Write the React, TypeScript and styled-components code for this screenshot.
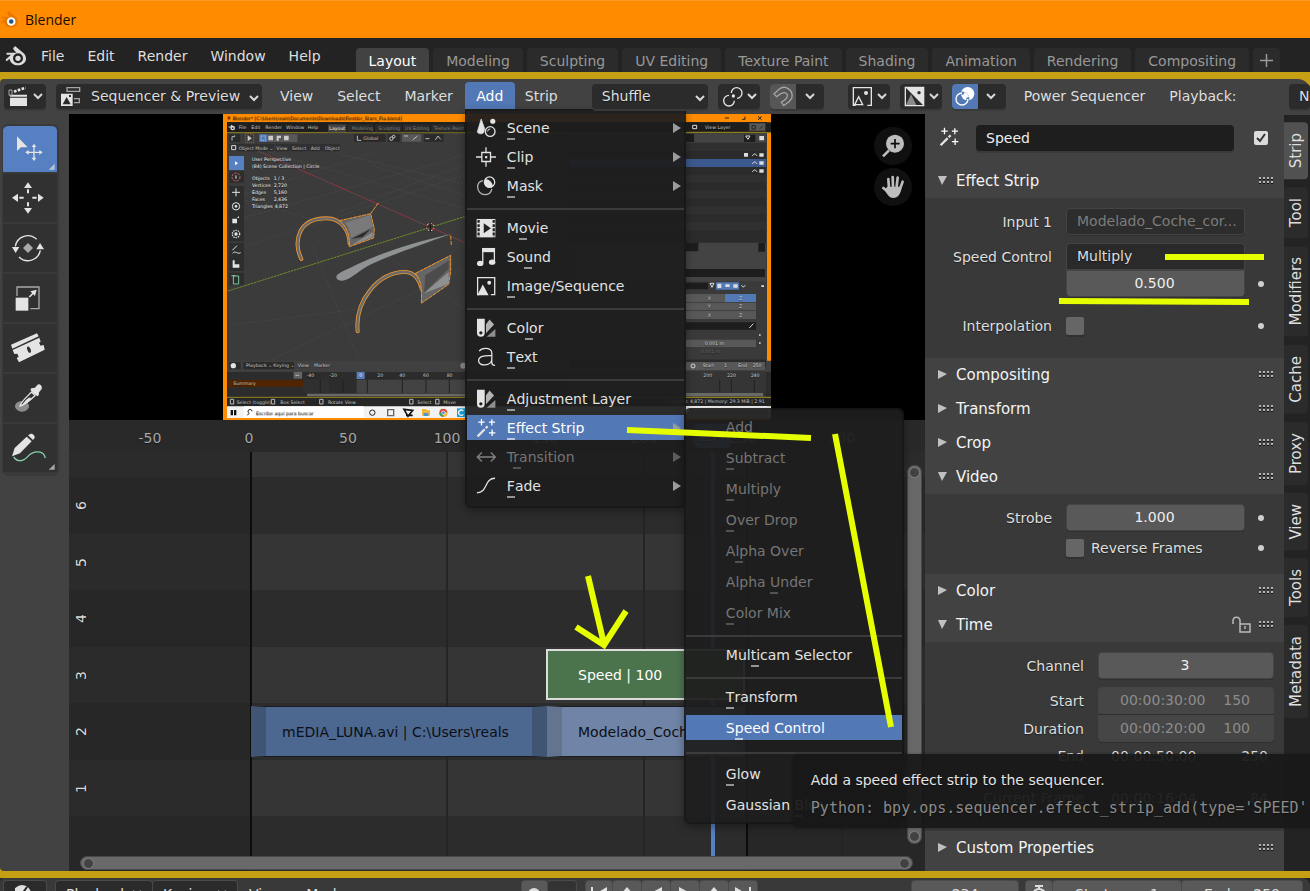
import React from 'react';
import styled, { createGlobalStyle, css } from 'styled-components';

const Global = createGlobalStyle`
  * { box-sizing: border-box; }
  html, body { margin: 0; background: #232323; }
  body, button, input, select {
    font-family: 'DejaVu Sans', sans-serif;
    font-size: 14px;
    line-height: 20px;
    color: #dedede;
  }
  button, input, select { border: 0; margin: 0; padding: 0; background: none; outline: 0; }
  svg { display: block; flex: none; }
`;

const accent = '#5279b6';
const gold = '#c5a014';
const marker = '#e6ff00';

/* ---------- shell ---------- */

const Page = styled.div`
  position: relative;
  height: 100vh;
  min-height: 600px;
  overflow: hidden;
  display: flex;
  flex-direction: column;
  text-shadow: 0 1px 1px rgba(0, 0, 0, 0.45);
`;

const TitleBar = styled.header`
  flex: none;
  height: 38px;
  display: flex;
  align-items: center;
  gap: 6px;
  border-top: 1px solid #ff9d26;
  background: #ff8c00;
  color: #140c00;
  font-family: 'Open Sans', 'Noto Sans', sans-serif;
  text-shadow: none;
`;

const TopBar = styled.nav`
  flex: none;
  height: 34px;
  display: flex;
  align-items: flex-end;
  padding-left: 5px;
  background: #232323;
`;

const MenuLabel = styled.button`
  height: 34px;
  padding: 2px 11px 0;
  white-space: nowrap;
`;

const MenuGroup = styled.div`
  display: flex;
  gap: 1px;
  margin-left: 3px;
`;

const Tabs = styled.div`
  display: flex;
  gap: 4px;
  margin-left: 24px;
`;

const WorkspaceTab = styled.button<{ $active?: boolean; $pad?: number }>`
  height: 24px;
  padding: 1px ${p => p.$pad ?? 13}px 0;
  white-space: nowrap;
  border-radius: 4px 4px 0 0;
  background: ${p => (p.$active ? '#424242' : '#2b2b2b')};
  color: ${p => (p.$active ? '#fff' : '#989898')};
`;

const Frame = styled.div`
  flex: 1;
  min-height: 0;
  display: flex;
  flex-direction: column;
  border-top: 7px solid ${gold};
  border-bottom: 7px solid ${gold};
  background: ${gold};
`;

const Editor = styled.main`
  flex: 1;
  min-height: 0;
  display: flex;
  flex-direction: column;
  border-radius: 4px 12px 4px 4px;
  background: #424242;
`;

/* ---------- editor header ---------- */

const HeaderBar = styled.div`
  position: relative;
  z-index: 3;
  flex: none;
  height: 35px;
  display: flex;
  align-items: flex-start;
  padding: 5px 0 0 4px;
`;

const Control = styled.div<{ $w: number; $left?: number; $right?: number }>`
  flex: none;
  position: relative;
  width: ${p => p.$w}px;
  height: 25px;
  margin-left: ${p => p.$left ?? 0}px;
  margin-right: ${p => p.$right ?? 0}px;
  display: flex;
  align-items: center;
  border-radius: 4px;
  background: #2b2b2b;
  box-shadow: 0 2px 0 #393939;
  overflow: hidden;
`;

const IconButton = styled.button<{ $pad?: number; $bg?: string; $w?: number }>`
  width: ${p => (p.$w ? p.$w + 'px' : '100%')};
  height: 25px;
  padding: 0 ${p => p.$pad ?? 4}px;
  display: flex;
  align-items: center;
  justify-content: space-between;
  background: ${p => p.$bg ?? 'transparent'};
`;

const PlainSelect = styled.select<{ $pad: number }>`
  appearance: none;
  width: 100%;
  height: 100%;
  padding: 0 0 2px ${p => p.$pad}px;
  text-shadow: inherit;
`;

const SelectArrow = styled.span`
  position: absolute;
  right: 3px;
  top: 11px;
  pointer-events: none;
`;

const SelectIcon = styled.span`
  position: absolute;
  left: 4px;
  top: 0;
  pointer-events: none;
`;

const HeaderMenu = styled.button`
  height: 25px;
  padding: 0 12px 2px;
  white-space: nowrap;
`;

const AddWrap = styled.div`
  position: relative;
  margin: -2px -2px 0 0;
`;

const AddButton = styled.button`
  width: 50px;
  height: 27px;
  border-radius: 4px 4px 0 0;
  background: ${accent};
  color: #fff;
`;

/* ---------- pop-up menus ---------- */

const menuSurface = css`
  position: absolute;
  list-style: none;
  margin: 0;
  border: 2px solid rgba(22, 22, 22, 0.9);
  background: rgba(30, 30, 30, 0.94);
  background-clip: padding-box;
  box-shadow: 0 3px 8px rgba(0, 0, 0, 0.35);
`;

const AddMenu = styled.ul`
  ${menuSurface}
  left: 0;
  top: 27px;
  width: 221px;
  padding: 2px 0 6px;
  border-radius: 0 0 6px 6px;
`;

const SubMenu = styled.ul`
  ${menuSurface}
  left: 217px;
  top: -5px;
  width: 220px;
  padding: 1px 0 2px;
  border-radius: 6px;
  color: #e4e4e4;
`;

const MenuRow = styled.li<{ $h: number }>`
  position: relative;
  height: ${p => p.$h}px;
  display: flex;
  align-items: center;
`;

const MenuItem = styled.button<{ $on?: boolean; $dim?: boolean; $sub?: boolean }>`
  width: 100%;
  height: 25px;
  display: flex;
  align-items: center;
  gap: 11px;
  padding: 0 3px 0 ${p => (p.$sub ? 40 : 9)}px;
  text-align: left;
  white-space: nowrap;
  background: ${p => (p.$on ? accent : 'transparent')};
  color: ${p => (p.$dim ? '#757575' : p.$on ? '#fff' : '#e2e2e2')};
  svg { opacity: ${p => (p.$dim ? 0.5 : 1)}; }
`;

const Grow = styled.span`
  flex: 1;
`;

const Accel = styled.span`
  position: relative;
  &::after {
    content: '';
    position: absolute;
    left: 0;
    bottom: -4px;
    width: 8px;
    height: 2px;
    background: currentColor;
    opacity: 0.6;
  }
`;

const Divider = styled.li<{ $before: number; $after: number }>`
  height: 2px;
  margin: ${p => p.$before}px 0 ${p => p.$after}px;
  background: #3b3b3b;
`;

const Tooltip = styled.div`
  position: absolute;
  left: 107px;
  top: 344px;
  width: 540px;
  height: 74px;
  padding: 16px 0 0 18px;
  display: flex;
  flex-direction: column;
  gap: 8px;
  border-radius: 6px;
  background: rgba(24, 24, 24, 0.94);
  box-shadow: 0 0 3px rgba(0, 0, 0, 0.3);
  white-space: nowrap;
`;

const Code = styled.code`
  font-family: 'DejaVu Sans Mono', monospace;
  font-size: 15px;
  color: #8b8b8b;
`;

/* ---------- body ---------- */

const Body = styled.div`
  flex: 1;
  min-height: 0;
  display: flex;
`;

const ToolColumn = styled.aside`
  flex: none;
  width: 69px;
  padding: 10px 0 0 2px;
`;

const ToolStack = styled.div`
  width: 57px;
  height: 352px;
  padding: 0 2px 0 1px;
  display: flex;
  flex-direction: column;
  gap: 2px;
  border-radius: 6px;
  background: #393939;
`;

const Tool = styled.button<{ $active?: boolean }>`
  height: 48px;
  border-top: ${p => (p.$active ? 2 : 0)}px solid #393939;
  border-radius: ${p => (p.$active ? '6px 6px 0 0' : '0')};
  background: ${p => (p.$active ? '#5680c2' : '#313131')};
  svg { margin-top: ${p => (p.$active ? -2 : 0)}px; }
`;

const Center = styled.div`
  flex: 1;
  min-width: 0;
  display: flex;
  flex-direction: column;
`;

const Preview = styled.section`
  position: relative;
  flex: none;
  height: 306px;
  display: flex;
  justify-content: center;
  background: #000;
`;

const Gizmos = styled.div`
  position: absolute;
  right: 13px;
  top: 13px;
  display: flex;
  flex-direction: column;
  gap: 3px;
`;

const Gizmo = styled.button`
  width: 38px;
  height: 38px;
  border-radius: 50%;
  background: #101010;
`;

const Timeline = styled.section`
  position: relative;
  flex: 1;
  min-height: 0;
  display: flex;
  flex-direction: column;
  overflow: hidden;
  background: #2d2d2d;
`;

const Ruler = styled.div`
  position: relative;
  z-index: 1;
  flex: none;
  height: 32px;
  background: #292929;
  color: #a6a6a6;
`;

const Tick = styled.span`
  position: absolute;
  top: 8px;
  width: 60px;
  margin-left: -31px;
  text-align: center;
`;

const FrameBadge = styled(Tick)`
  top: 4px;
  width: 38px;
  height: 24px;
  margin-left: -19px;
  line-height: 24px;
  border-radius: 5px;
  background: #5680c2;
  color: #fff;
`;

const Channel = styled.div<{ $light?: boolean; $h: number }>`
  position: relative;
  flex: ${p => (p.$h ? 'none' : '1')};
  height: ${p => p.$h}px;
  padding-left: 2px;
  display: flex;
  align-items: center;
  background: ${p => (p.$light ? '#353535' : '#2c2c2c')};
`;

const ChannelNo = styled.span`
  position: relative;
  z-index: 2;
  writing-mode: vertical-rl;
  rotate: 180deg;
  color: #dcdcdc;
`;

const Shade = styled.div<{ $side: 'left' | 'right' }>`
  position: absolute;
  top: 32px;
  bottom: 0;
  ${p => p.$side}: 0;
  background: rgba(34, 34, 34, 0.5);
`;

const GridLine = styled.div<{ $bound?: boolean }>`
  position: absolute;
  top: 32px;
  bottom: 15px;
  width: 2px;
  background: ${p => (p.$bound ? '#0c0c0c' : '#242424')};
`;

const PlayLine = styled.div`
  position: absolute;
  top: 28px;
  bottom: 15px;
  width: 4px;
  margin-left: -1px;
  background: #5680c2;
`;

const Clip = styled.div<{ $top: number; $bg: string; $edge?: string; $ink: string; $line: string; $lw: number }>`
  position: absolute;
  z-index: 1;
  top: ${p => p.$top}px;
  height: 51px;
  display: flex;
  align-items: center;
  overflow: hidden;
  white-space: nowrap;
  border: ${p => p.$lw}px solid ${p => p.$line};
  border-left: ${p => (p.$edge ? 15 : 2)}px solid ${p => p.$edge ?? p.$line};
  border-right: ${p => (p.$edge ? 15 : 2)}px solid ${p => p.$edge ?? p.$line};
  padding-left: ${p => (p.$edge ? 16 : 30)}px;
  background: ${p => p.$bg};
  color: ${p => p.$ink};
  text-shadow: none;
`;

const ScrollX = styled.div`
  position: absolute;
  z-index: 2;
  left: 11px;
  right: 12px;
  bottom: 1px;
  height: 14px;
  display: flex;
  justify-content: space-between;
  align-items: center;
  padding: 0 2px;
  border: 1px solid #484848;
  border-radius: 7px;
  background: #696969;
`;

const ScrollY = styled(ScrollX)`
  left: auto;
  right: 3px;
  top: 45px;
  bottom: 27px;
  width: 15px;
  height: auto;
  flex-direction: column;
  padding: 1px 0;
`;

const Knob = styled.span`
  width: 11px;
  height: 11px;
  border-radius: 50%;
  border: 1px solid #808080;
  background: #424242;
`;

/* ---------- properties ---------- */

const Props = styled.aside`
  flex: none;
  width: 359px;
  background: #424242;
`;

const NameRow = styled.div`
  height: 50px;
  padding: 11px 0 0 14px;
  display: flex;
  align-items: flex-start;
  gap: 17px;
`;

const NameInput = styled.input`
  width: 258px;
  height: 26px;
  padding-left: 10px;
  border-radius: 4px;
  background: #1e1e1e;
  color: #eee;
  box-shadow: 0 2px 0 #393939;
`;

const Check = styled.input<{ $size: number }>`
  appearance: none;
  flex: none;
  width: ${p => p.$size}px;
  height: ${p => p.$size}px;
  border-radius: 2px;
  background: #666;
  box-shadow: 0 2px 0 #303030;
  &:checked {
    background: #dcdcdc url("data:image/svg+xml,%3Csvg xmlns='http://www.w3.org/2000/svg' viewBox='0 0 14 14'%3E%3Cpath d='M3 7l3 3 5-7' fill='none' stroke='%23333' stroke-width='2'/%3E%3C/svg%3E") center / contain;
    box-shadow: none;
  }
`;

const NameCheck = styled.span`
  padding: 6px 0 0 3px;
  line-height: 0;
`;

const SectionHead = styled.div`
  height: 34px;
  padding: 0 10px 0 12px;
  display: flex;
  align-items: center;
  gap: 7px;
`;

const SectionTitle = styled.button`
  flex: 1;
  display: flex;
  align-items: center;
  gap: 9px;
  text-align: left;
  font-size: 15px;
  color: #f4f4f4;
`;

const SectionBody = styled.div<{ $h: number }>`
  height: ${p => p.$h}px;
  padding-top: 10px;
  background: #393939;
`;

const Row = styled.div<{ $mb?: number; $label?: number; $tail?: number }>`
  display: grid;
  grid-template-columns: ${p => p.$label ?? 127}px 1fr ${p => p.$tail ?? 39}px;
  margin-bottom: ${p => p.$mb ?? 0}px;
  align-items: center;
`;

const Label = styled.label`
  text-align: right;
  white-space: nowrap;
`;

const FieldBox = styled.div`
  position: relative;
  margin-left: 14px;
  display: flex;
  align-items: center;
  gap: 7px;
`;

const Field = styled.input<{ $kind: 'num' | 'off' | 'text'; $r?: string }>`
  width: 100%;
  min-width: 0;
  height: 27px;
  border-radius: ${p => p.$r ?? '4px'};
  padding: 0 4px 2px ${p => (p.$kind === 'text' ? 10 : 2)}px;
  text-align: ${p => (p.$kind === 'text' ? 'left' : 'center')};
  text-overflow: ellipsis;
  white-space: pre;
  border: 1px solid #444;
  box-shadow: 0 1px 0 #303030;
  background: ${p => (p.$kind === 'num' ? '#595959' : p.$kind === 'off' ? '#464646' : '#2d2d2d')};
  color: ${p => (p.$kind === 'num' ? '#eee' : p.$kind === 'off' ? '#8c8c8c' : '#7c7c7c')};
`;

const ModeSelect = styled(PlainSelect)`
  height: 27px;
  border: 1px solid #444;
  border-radius: 4px 4px 0 0;
  background: #2a2a2a;
`;

const AnimDot = styled.span`
  width: 6px;
  height: 6px;
  margin-left: 13px;
  border-radius: 50%;
  background: #cfcfcf;
`;

const Stat = styled.span`
  flex: 1;
  display: flex;
  justify-content: space-between;
  padding: 0 6px 0 13px;
`;

const SideTabs = styled.nav`
  flex: none;
  width: 26px;
  margin-top: 1px;
  padding-top: 7px;
  display: flex;
  flex-direction: column;
  align-items: flex-start;
  gap: 8px;
  background: #232323;
`;

const SideTab = styled.button<{ $active?: boolean }>`
  writing-mode: vertical-rl;
  rotate: 180deg;
  width: 24px;
  padding: 11px 0;
  font-size: 15px;
  white-space: nowrap;
  border-radius: 4px 0 0 4px;
  background: ${p => (p.$active ? '#515151' : '#2b2b2b')};
`;

/* ---------- footer ---------- */

const Footer = styled.footer`
  flex: none;
  height: 13px;
  overflow: hidden;
  display: flex;
  align-items: flex-start;
  padding: 3px 8px 0 4px;
  border-radius: 4px 8px 0 0;
  background: #393939;
`;

const FootButton = styled.button<{ $w: number; $left?: number; $tone?: string; $between?: number }>`
  flex: none;
  width: ${p => p.$w}px;
  height: 25px;
  margin-left: ${p => p.$left ?? 1}px;
  padding: 0 ${p => p.$between ?? 8}px;
  display: flex;
  align-items: center;
  justify-content: ${p => (p.$between ? 'space-between' : 'center')};
  border-radius: 3px;
  background: ${p => p.$tone ?? '#595959'};
  box-shadow: 0 0 0 1px #4a4a4a;
  white-space: nowrap;
`;

const FootMenu = styled.button`
  height: 25px;
  padding: 0 12px;
`;

const Push = styled.span<{ $max: number }>`
  flex: 1 1 0;
  max-width: ${p => p.$max}px;
`;

const Annotations = styled.svg`
  position: absolute;
  z-index: 9;
  left: 0;
  top: 0;
  pointer-events: none;
`;

/* ---------- icons ---------- */

type IconProps = { box: string; w?: number; h?: number; children: React.ReactNode };
const Icon = ({ box, w = 20, h = 20, children }: IconProps) => (
  <svg width={w} height={h} viewBox={box} fill="none" stroke="none" aria-hidden="true">{children}</svg>
);

const W = '#e4e4e4';

const Chevron = () => (
  <svg width="10" height="7" viewBox="0 0 10 7" fill="none" stroke="#d8d8d8" strokeWidth="2"><path d="M1 1l4 4 4-4" /></svg>
);

const Wand = () => (
  <>
    <path d="M53 381l22-22" stroke={W} strokeWidth="7" />
    <path d="M78 356l6-6" stroke={W} strokeWidth="7" />
    <path d="M55 337h20M65 327v20M88 337h19M97 328v19M88 370h20M98 360v20" stroke="#fff" strokeWidth="4" />
  </>
);

const Swatches = ({ dy = 0 }: { dy?: number }) => (
  <g transform={`translate(0 ${dy})`}>
    <path fillRule="evenodd" fill={W} d="M51 27h24v44a12 12 0 0 1-24 0zM63 66a5 5 0 1 0 .1 0z" />
    <path d="M79 44l11-14 14 15-25 27z" fill="#b4b4b4" />
    <path d="M81 83l27-24v24z" fill="#8f8f8f" />
  </g>
);

const menuIcons: Record<string, React.ReactNode> = {
  Scene: (
    <Icon box="48 32 62 60">
      <path d="M64 34l-12 40c2 7 15 8 20 2l3-12z" fill={W} stroke={W} strokeWidth="2" />
      <circle cx="100" cy="41" r="8" fill={W} />
      <circle cx="92" cy="73" r="15" stroke={W} strokeWidth="4" fill="#222" />
      <path d="M84 73a8 8 0 0 1 8-8" stroke={W} strokeWidth="3" />
    </Icon>
  ),
  Clip: (
    <Icon box="46 120 62 60">
      <path d="M64 136h27v28H64zM77 120v16M77 164v16M46 150h18M91 150h17" stroke={W} strokeWidth="4" />
      <path d="M74 147h7v7h-7z" fill={W} />
    </Icon>
  ),
  Mask: (
    <Icon box="48 204 62 62">
      <circle cx="90" cy="223" r="16" stroke={W} strokeWidth="4" />
      <path d="M74 226a16 16 0 0 1 4-13 24 24 0 0 1 22 24 16 16 0 0 1-26-11z" fill={W} />
      <path d="M70 218c-12 2-17 10-17 19 0 14 10 25 22 25 11 0 20-7 22-18" stroke="#b5b5b5" strokeWidth="4" />
    </Icon>
  ),
  Movie: (
    <Icon box="48 331 62 60">
      <path d="M50 333h58v57H50z" fill={W} />
      <path d="M72 346v31l22-15z" fill="#222" />
      <path d="M56 333v57M103 333v57" stroke="#222" strokeWidth="7" strokeDasharray="9 4" strokeDashoffset="-3" />
    </Icon>
  ),
  Sound: (
    <Icon box="48 418 62 60">
      <path d="M69 466v-44h36v42" stroke={W} strokeWidth="4" />
      <path d="M67 420h40v13H67z" fill={W} />
      <ellipse cx="61" cy="468" rx="10" ry="8" fill={W} />
      <ellipse cx="98" cy="464" rx="10" ry="8" fill={W} />
    </Icon>
  ),
  'Image/Sequence': (
    <Icon box="48 505 62 60">
      <path d="M58 562H53v-53h53v53h-12" stroke={W} strokeWidth="4" />
      <path d="M52 564l17-34 18 34z" fill={W} />
      <circle cx="89" cy="525" r="6" fill={W} />
    </Icon>
  ),
  Color: <Icon box="48 26 62 60"><Swatches /></Icon>,
  Text: (
    <Icon box="48 112 62 60">
      <path d="M58 124c8-12 39-13 39 7v28c0 7 3 9 10 9M97 138c-24-1-41 2-41 16 0 18 41 17 41-5" stroke={W} strokeWidth="4" />
    </Icon>
  ),
  'Adjustment Layer': <Icon box="48 239 62 60"><Swatches dy={213} /></Icon>,
  'Effect Strip': <Icon box="48 325 62 60"><Wand /></Icon>,
  Transition: (
    <Icon box="48 414 62 60">
      <path d="M52 444h56M66 430l-14 14 14 14M94 430l14 14-14 14" stroke={W} strokeWidth="4" />
    </Icon>
  ),
  Fade: (
    <Icon box="48 500 62 60">
      <path d="M51 551c34 0 22-45 56-45" stroke={W} strokeWidth="4" />
    </Icon>
  ),
};

const BlenderMark = ({ fill, eye, hole }: { fill: string; eye: string; hole: string }) => (
  <>
    <path d="M46 141l24 20c6 5 8 11 8 17 0 12-11 20-24 20-14 0-24-8-25-20l-8 7c-3 2-5-3-3-5l15-14H22c-4 0-4-6 0-6h27l-9-10c-2-4 3-8 6-9z" fill={fill} />
    <circle cx="54" cy="177" r="15" fill={hole} />
    <circle cx="54" cy="177" r="8" fill={eye} />
  </>
);

const tools: { label: string; y: number; art: React.ReactNode }[] = [
  {
    label: 'Tweak', y: 27,
    art: (
      <>
        <path d="M51 64v44l12-11h20z" fill={W} />
        <path d="M80 112h44M102 90v44" stroke={W} strokeWidth="4" />
        <path d="M76 112l10-7v14zM128 112l-10-7v14zM102 86l-7 10h14zM102 138l-7-10h14z" fill={W} />
        <path d="M164 146v18h-18z" fill="#b8c4d8" />
      </>
    ),
  },
  {
    label: 'Move', y: 177,
    art: (
      <>
        <path d="M84 202l12 17H72zM84 296l12-17H72zM36 248l18-12v25zM131 248l-17-12v25z" fill={W} />
        <path d="M84 223v12M84 262v12M58 248h13M97 248h13" stroke={W} strokeWidth="6" />
      </>
    ),
  },
  {
    label: 'Rotate', y: 327,
    art: (
      <>
        <path d="M46 394a38 38 0 0 1 64-21M121 406a38 38 0 0 1-64 20" stroke={W} strokeWidth="4" />
        <path d="M36 396h22l-11 18zM109 403h23l-12-19z" fill={W} />
        <path d="M84 384l15 15-15 15-15-15z" fill="#a9a9a9" />
      </>
    ),
  },
  {
    label: 'Scale', y: 477,
    art: (
      <>
        <path d="M51 543v-27h66v65H91" stroke="#a9a9a9" strokeWidth="4" />
        <path d="M47 548h38v39H47z" fill={W} />
        <path d="M88 546l15-15" stroke={W} strokeWidth="5" />
        <path d="M110 524l-19 5 14 14z" fill={W} />
      </>
    ),
  },
  {
    label: 'Blade', y: 627,
    art: (
      <>
        <path d="M33 689l78-34 5 9-79 37z" fill={W} />
        <path d="M38 705l80-37 4 12-5 3 5 9 9-2 3 14-77 38-7-13 6-4-4-9-9 1z" fill={W} />
        <ellipse cx="87" cy="704" rx="5" ry="10" fill="#313131" transform="rotate(-20 87 704)" />
      </>
    ),
  },
  {
    label: 'Sample', y: 777,
    art: (
      <>
        <ellipse cx="66" cy="874" rx="21" ry="16" fill="#8d8d8d" />
        <path d="M60 873c4-14 18-25 35-42l10 11c-16 15-29 28-45 31z" fill="#313131" stroke={W} strokeWidth="4" />
        <path d="M62 872c10-5 12-18 28-25l4 6c-14 12-20 15-32 19z" fill={W} />
        <path d="M93 822l14-3c4-13 17-12 17-2 0 9-5 10-8 14l-2 11-7-3-13-12z" fill={W} stroke={W} strokeWidth="3" />
      </>
    ),
  },
  {
    label: 'Annotate', y: 927,
    art: (
      <>
        <path d="M41 1026c10 14 27 16 42-1 17-20 48-20 53 4" stroke="#86cfa8" strokeWidth="4" />
        <path d="M36 1024l8-25 36-34 15 14-35 36z" fill={W} />
        <path d="M84 961l8-5c6-1 13 6 12 12l-5 7z" fill={W} />
        <path d="M164 1047v17h-18z" fill="#a5a5a5" />
      </>
    ),
  },
];

/* ---------- preview picture ---------- */

const Scene = styled.g`
  font-family: 'DejaVu Sans', sans-serif;
  font-size: 14px;
  fill: #c9c9c9;
  path:not([fill]), circle:not([fill]) { fill: none; }
`;

const PreviewArt = () => (
  <svg width="548" height="306" viewBox="223 114 548 306" fill="none">
    <path d="M223 114h548v306H223z" fill="#ff8c00" />
    <path d="M227 122h540v296H227z" fill="#3b3b3b" />
    <Scene transform="translate(222 112) scale(.33333)">
      <path d="M15 31h1640v31H15z" fill="#1f1f1f" />
      <path d="M15 62h1640" stroke="#8f8220" strokeWidth="3" />
      <path d="M318 37h54v24h-54z" fill="#444" />
      <path d="M376 37h78v24h-78zM460 37h78v24h-78zM543 37h80v24h-80zM628 37h98v24h-98z" fill="#2b2b2b" />
      <circle cx="21" cy="18" r="5" fill="#7a4400" />
      <text x="32" y="24" fill="#2c1900">Blender* [C:\Users\reals\Documents\Downloads\Fiestbir_Stars_Fla.blend]</text>
      <circle cx="32" cy="48" r="5" stroke="#ddd" strokeWidth="4" /><path d="M20 45h14l-7-6" stroke="#ddd" strokeWidth="3" />
      <text x="50" y="52">File</text><text x="88" y="52">Edit</text><text x="130" y="52">Render</text><text x="192" y="52">Window</text><text x="257" y="52">Help</text>
      <text x="322" y="54" fill="#fff">Layout</text>
      <g fill="#8a8a8a"><text x="389" y="54">Modeling</text><text x="469" y="54">Sculpting</text><text x="549" y="54">UV Editing</text><text x="635" y="54">Texture Paint</text></g>
      <path d="M22 67h32v23H22zM396 67h94v22h-94zM498 67h36v22h-36zM606 67h58v22h-58z" fill="#2a2a2a" />
      <path d="M112 67h114v23H112zM540 67h58v22h-58z" fill="#595959" />
      <path d="M112 67h23v23h-23z" fill={accent} />
      <path d="M70 65h25v27H70z" stroke="#e08b1c" strokeWidth="2" strokeDasharray="3 4" />
      <path d="M77 70v18l12-9zM139 71h14v14h-14zM164 71h13v7h-7v8h-6zM186 71h14v14h-14z" fill="#ccc" />
      <path d="M117 72h13v13h-13z" stroke="#ddd" strokeWidth="2" strokeDasharray="3 2" />
      <path d="M30 86v-12h8v-4M406 71v14h12M546 72h12M572 84l14-12M610 80h12M640 84l8-12 8 10" stroke="#bbb" strokeWidth="3" />
      <circle cx="508" cy="80" r="5" stroke="#ccc" strokeWidth="3" /><circle cx="515" cy="74" r="4" stroke="#ccc" strokeWidth="3" />
      <text x="424" y="83">Global</text>
      <path d="M22 96h134v22H22zM160 96h194v22H160z" fill="#303030" />
      <path d="M29 101h12v12H29z" stroke="#ddd" strokeWidth="3" />
      <text x="50" y="113">Object Mode ⌄</text><text x="163" y="113">View</text><text x="210" y="113">Select</text><text x="266" y="113">Add</text><text x="308" y="113">Object</text>
      <path d="M20 330L727 130M20 420L727 190M140 120L727 290M270 400L410 742M150 742L727 470M420 380L727 590M20 262L460 120M330 120L727 215M18 250L300 330M350 300L727 160M20 640L420 590M450 160L727 250" stroke="#4a4a4a" strokeWidth="2" strokeDasharray="7 4" />
      <path d="M110 118L727 391" stroke="#9b3a46" strokeWidth="3" strokeDasharray="5 2" />
      <path d="M18 537L727 314" stroke="#6f9026" strokeWidth="3" strokeDasharray="7 2" />
      <g fill="#f0f0f0">
        <text x="90" y="147">User Perspective</text><text x="90" y="169">(84) Scene Collection | Circle</text>
        <text x="90" y="203">Objects</text><text x="155" y="203">1 / 3</text><text x="90" y="225">Vertices</text><text x="155" y="225">2,720</text>
        <text x="90" y="246">Edges</text><text x="155" y="246">5,160</text><text x="90" y="267">Faces</text><text x="155" y="267">2,436</text>
        <text x="90" y="289">Triangles</text><text x="158" y="289">4,872</text>
      </g>
      <path d="M22 178h44v34H22zM22 222h44v166H22zM22 393h44v84H22zM22 482h44v38H22z" fill="#2d2d2d" />
      <path d="M21 132h45v42H21z" fill="#5680c2" />
      <path d="M39 148v12l9-6z" fill="#fff" />
      <circle cx="42" cy="195" r="12" stroke="#cc6060" strokeWidth="3" strokeDasharray="7 3" />
      <path d="M30 241h24M42 229v24M42 190v10M31 415l14-14M32 424c8-10 14 4 24-2" stroke={W} strokeWidth="3" />
      <circle cx="42" cy="283" r="11" stroke={W} strokeWidth="3" /><circle cx="42" cy="283" r="4" fill={W} />
      <path d="M31 320h14v14H31zM45 318l6-6v6zM32 445h6v12h14v10H32z" fill={W} />
      <circle cx="42" cy="366" r="11" stroke={W} strokeWidth="4" strokeDasharray="4 3" /><circle cx="42" cy="366" r="5" fill={W} />
      <path d="M34 492h16v24H34zM28 491h12" stroke="#7dc9a0" strokeWidth="3" />
      <path d="M238 441c-24-50-12-122 75-122 50 0 70 45 70 76M407 658c-9-90 60-178 142-178 30 0 45 28 50 50" stroke="#ef962f" strokeWidth="12" strokeLinecap="round" />
      <path d="M238 441c-24-50-12-122 75-122 50 0 70 45 70 76M407 658c-9-90 60-178 142-178 30 0 45 28 50 50" stroke="#6a6a6a" strokeWidth="7" strokeLinecap="round" />
      <path d="M352 326l94-21 11 45-2 28-73 26c2-40-10-62-30-78z" fill="#666" stroke="#ef962f" strokeWidth="3" strokeDasharray="12 2" />
      <path d="M446 305l24-34" stroke="#ef962f" strokeWidth="3" strokeDasharray="12 2" />
      <path d="M370 332l74-22 8 34-66 34c0-18-6-34-16-46z" fill="#7a7a7a" />
      <path d="M388 381l58-30-24 24z" fill="#2d2d2d" /><path d="M388 400l64-24v-16z" fill="#8c8c8c" />
      <path d="M580 484l106-54v48l-6 39-82 57c2-40 0-70-18-90z" fill="#666" stroke="#ef962f" strokeWidth="3" strokeDasharray="12 2" />
      <path d="M606 542l74-72v-24l-70 44z" fill="#4c4c4c" /><path d="M606 544l74-64v36z" fill="#8f9190" />
      <path d="M343 494c0-10 28-20 60-36 80-38 170-66 284-92-100 36-190 66-250 96-34 20-54 42-75 44-11 0-19-4-19-12z" fill="#8f9292" />
      <path d="M686 371l2 32" stroke="#ef962f" strokeWidth="3" strokeDasharray="12 4" />
      <circle cx="625" cy="345" r="11" stroke="#eee" strokeWidth="3" strokeDasharray="5 5" /><circle cx="625" cy="345" r="11" stroke="#c33" strokeWidth="3" strokeDasharray="5 5" strokeDashoffset="5" /><path d="M610 345h30M625 331v29" stroke="#111" strokeWidth="3" />
      <path d="M15 746h1640v34H15z" fill="#404040" />
      <path d="M22 750h34v22H22zM64 750h152v22H64z" fill="#2c2c2c" />
      <circle cx="34" cy="761" r="8" fill={W} /><circle cx="724" cy="761" r="9" fill="#888" />
      <text x="72" y="766">Playback ⌄</text><text x="154" y="766">Keying ⌄</text><text x="227" y="766">View</text><text x="276" y="766">Marker</text>
      <path d="M15 780h1640v75H15z" fill="#2c2c2c" />
      <path d="M243 803h80v40h-80z" fill="#303030" /><path d="M404 803h360v40H404z" fill="#434343" />
      <path d="M15 804h228v21H15z" fill="#512502" /><path d="M215 780h25v20h-25z" fill="#666" />
      <path d="M295 803v40M363 803v40M436 803v40M541 803v40M612 803v40M682 803v40" stroke="#222" strokeWidth="3" />
      <path d="M404 780h24v21h-24z" fill="#5680c2" /><path d="M255 845h500v8H255z" fill="#696969" />
      <text x="34" y="819">Summary</text>
      <g><text x="220" y="796">↔</text><text x="254" y="796">-40</text><text x="322" y="796">-20</text><text x="412" y="796" fill="#fff">0</text><text x="466" y="796">20</text><text x="532" y="796">40</text><text x="603" y="796">60</text><text x="674" y="796">80</text></g>
      <path d="M15 857h1640v26H15z" fill="#262626" /><path d="M15 856h1640" stroke="#8f8220" strokeWidth="3" />
      <path d="M25 862h10v14H25zM148 862h10v14h-10zM293 862h10v14h-10zM563 862h10v14h-10zM641 862h10v14h-10z" stroke="#bbb" strokeWidth="3" />
      <g><text x="44" y="875">Select (toggle)</text><text x="175" y="875">Box Select</text><text x="318" y="875">Rotate View</text><text x="586" y="875">Select</text><text x="664" y="875">Move</text></g>
      <path d="M15 883h1640v35H15z" fill="#f2f2f2" /><path d="M65 883h360v35H65z" fill="#fff" />
      <path d="M26 894h7v16h-7zM36 894h7v16h-7z" fill="#111" />
      <text x="102" y="908" fill="#333">Escribe aquí para buscar</text>
      <path d="M76 910l5-6M82 904a6 6 0 1 1 8-6" stroke="#222" strokeWidth="3" /><circle cx="451" cy="902" r="8" stroke="#222" strokeWidth="3" />
      <path d="M497 893h18v18h-18z" stroke="#666" strokeWidth="4" /><path d="M546 892l26 3-14 18zM552 910h20" stroke="#111" strokeWidth="5" />
      <path d="M600 891h12l3 4h9v16h-24z" fill="#efb733" /><path d="M605 903h14v9h-14z" fill="#4a94d8" />
      <circle cx="664" cy="902" r="12" fill="#d94b3c" /><path d="M652 902a12 12 0 0 0 12 12v-12z" fill="#3aa757" /><path d="M664 914a12 12 0 0 0 12-13h-12z" fill="#f3bf2a" /><circle cx="664" cy="902" r="5" fill="#4a83e8" stroke="#fff" strokeWidth="2" />
      <path d="M705 889h24v26h-24z" fill="#18a4da" /><path d="M724 897a8 8 0 1 0 0 10" stroke="#fff" strokeWidth="4" />
    </Scene>
    <Scene transform="translate(680 108) scale(.33333)">
      <path d="M-330 77h588v700h-588z" fill="#2b2b2b" />
      <path d="M-330 105h588v24h-588zM-330 200h588v23h-588zM-330 247h588v23h-588zM-330 295h588v23h-588zM-330 342h588v24h-588z" fill="#303030" />
      <path d="M-330 77h588v27h-588zM-330 404h588v350h-588z" fill="#434343" />
      <path d="M-330 153h588v24h-588z" fill="#3c598f" />
      <path d="M-330 520h588v234h-588z" fill="#3a3a3a" />
      <path d="M18 78h24v24H18zM192 80h34v22h-34zM18 404h37v26H18zM235 405h20v26h-20zM18 483h237v24H18zM18 524h66v20H18zM18 643h210v22H18zM30 46h174v22H30z" fill="#1d1d1d" />
      <path d="M18 558h210v24H18zM18 584h210v23H18zM18 609h210v24H18zM18 695h210v22H18zM18 762h237v24H18zM208 46h48v22h-48z" fill="#585858" />
      <path d="M135 558h93v24h-93zM108 523h69v22h-69z" fill={accent} />
      <path d="M-330 790h588v65h-588z" fill="#353535" /><path d="M18 855h232v10H18z" fill="#696969" />
      <path d="M119 815v38M154 815v38M223 815v38" stroke="#222" strokeWidth="3" />
      <path d="M18 73h240M18 868h240" stroke="#8f8220" strokeWidth="3" />
      <path d="M18 870h243v24H18z" fill="#262626" /><path d="M18 894h243v9H18z" fill="#f2f2f2" /><path d="M18 903h243v25H18z" fill="#ddd" />
      <path d="M135 30h12M187 34h8v-8M234 25l11 11M245 25l-11 11M216 53h10v10h-10zM240 62l8-8" stroke="#222" strokeWidth="3" />
      <path d="M38 52h12v10H38zM197 84h13l-6 10zM217 144c4-8 10-8 14 0M217 168c4-8 10-8 14 0M217 192c4-8 10-8 14 0M90 526h12l-6 12zM208 660l12-13M184 532l6 5 6-5" stroke="#ddd" strokeWidth="3" />
      <path d="M192 135h12v11h-12zM238 136h13v10h-13zM238 160h13v10h-13zM238 184h13v10h-13zM238 84h14v13h-14zM112 527h12v13h-12zM136 529h13v8h-13zM160 529h13v10h-13zM244 532h8v5h-8zM237 679h5v4h-5zM237 703h5v4h-5z" fill="#ddd" />
      <text x="75" y="63">View Layer</text><text x="83" y="575">X</text><text x="177" y="575">Z</text><text x="83" y="600">Y</text><text x="177" y="600">Z</text><text x="83" y="626">X</text><text x="177" y="626">Z</text>
      <text x="74" y="711">0.001 m</text><text x="62" y="736" fill="#666">0.001 m</text>
      <circle cx="39" cy="774" r="6" stroke="#ddd" strokeWidth="3" />
      <text x="68" y="778">Start</text><text x="132" y="778">1</text><text x="174" y="778">End</text><text x="218" y="778">250</text>
      <text x="70" y="808">200</text><text x="141" y="808">220</text><text x="212" y="808">240</text>
      <text x="254" y="886" textAnchor="end">Triangles: 4,872 | Memory: 29.3 MiB | 2.91</text>
    </Scene>
  </svg>
);

/* ---------- data ---------- */

type Entry = { text: string; key?: number; arrow?: boolean; dim?: boolean; on?: boolean } | 'sep' | 'wide';

const addMenu: Entry[] = [
  { text: 'Scene', key: 0, arrow: true }, { text: 'Clip', key: 0, arrow: true }, { text: 'Mask', key: 0, arrow: true }, 'sep',
  { text: 'Movie', key: 1 }, { text: 'Sound', key: 2 }, { text: 'Image/Sequence', key: 0 }, 'sep',
  { text: 'Color', key: 2 }, { text: 'Text', key: 0 }, 'sep',
  { text: 'Adjustment Layer', key: 0 }, { text: 'Effect Strip', key: 0, arrow: true, on: true },
  { text: 'Transition', key: 1, arrow: true, dim: true }, { text: 'Fade', key: 0, arrow: true },
];

const effectMenu: Entry[] = [
  { text: 'Add', dim: true }, { text: 'Subtract', key: 0, dim: true }, { text: 'Multiply', key: 0, dim: true },
  { text: 'Over Drop', key: 0, dim: true }, { text: 'Alpha Over', key: 1, dim: true }, { text: 'Alpha Under', key: 6, dim: true },
  { text: 'Color Mix', key: 0, dim: true }, 'sep', { text: 'Multicam Selector', key: 3 }, 'sep',
  { text: 'Transform', key: 0 }, { text: 'Speed Control', key: 1, on: true }, 'wide', { text: 'Glow', key: 0 }, { text: 'Gaussian Blur', key: 9 },
];

const MenuText = ({ text, at }: { text: string; at?: number }) =>
  at === undefined ? <span>{text}</span> : <span>{text.slice(0, at)}<Accel>{text[at]}</Accel>{text.slice(at + 1)}</span>;

const Arrow = () => <svg width="8" height="10" viewBox="0 0 8 10"><path d="M0 0l8 5-8 5z" fill="#9b9b9b" /></svg>;

const EffectMenu = () => (
  <SubMenu>
    {effectMenu.map((e, i) =>
      e === 'sep' ? <Divider key={i} $before={7} $after={2} /> :
      e === 'wide' ? <Divider key={i} $before={9} $after={4} /> : (
        <MenuRow key={i} $h={31}>
          <MenuItem $sub $on={e.on} $dim={e.dim}><MenuText text={e.text} at={e.key} /></MenuItem>
        </MenuRow>
      ))}
    <Tooltip role="tooltip">
      <span>Add a speed effect strip to the sequencer.</span>
      <Code>Python: bpy.ops.sequencer.effect_strip_add(type='SPEED')</Code>
    </Tooltip>
  </SubMenu>
);

const Grip = () => (
  <svg width="15" height="8" viewBox="0 0 15 8">
    {[0, 1, 2, 3].map(c => [0, 1].map(r => (
      <g key={`${c}${r}`}><path d={`M${c * 4} ${r * 4 + 1}h2v2h-2z`} fill="#111" /><path d={`M${c * 4} ${r * 4}h2v2h-2z`} fill="#b5b5b5" /></g>
    )))}
  </svg>
);

const Section = ({ title, open, lock, h = 0, children }: { title: string; open?: boolean; lock?: boolean; h?: number; children?: React.ReactNode }) => (
  <section>
    <SectionHead>
      <SectionTitle aria-expanded={!!open}>
        <svg width="10" height="10" viewBox="0 0 10 10"><path d={open ? 'M1 0h9l-5 9z' : 'M1 0l9 4-9 5z'} fill="#c0c0c0" /></svg>
        {title}
      </SectionTitle>
      {lock && (
        <svg width="20" height="18" viewBox="0 0 20 18" fill="none" stroke="#b9b9b9" strokeWidth="1.5">
          <path d="M8 8h10v8H8zM8 8V5C8 0 1 0 1 5v3" /><path d="M13 10v3" />
        </svg>
      )}
      <Grip />
    </SectionHead>
    {open && <SectionBody $h={h}>{children}</SectionBody>}
  </section>
);

const START = 181;
const PX = 1.975;
const at = (frame: number) => ({ left: Math.round(START + frame * PX) });
const span = (from: number, to: number) => ({ left: Math.round(START + from * PX), width: Math.round((to - from) * PX) });

const TimelineView = () => (
  <Timeline>
    <Ruler>
      {[-50, 0, 50, 100, 150, 200, 250, 300].map(f => <Tick key={f} style={at(f)}>{f}</Tick>)}
      <FrameBadge style={at(234)}>234</FrameBadge>
    </Ruler>
    <Channel $light $h={25} />
    <Channel $h={57}><ChannelNo>6</ChannelNo></Channel>
    <Channel $light $h={56}><ChannelNo>5</ChannelNo></Channel>
    <Channel $h={57}><ChannelNo>4</ChannelNo></Channel>
    <Channel $light $h={56}>
      <ChannelNo>3</ChannelNo>
      <Clip style={span(150, 251)} $top={2} $bg="#4b744d" $ink="#fff" $line="#dcdcdc" $lw={2}>Speed | 100</Clip>
    </Channel>
    <Channel $h={57}>
      <ChannelNo>2</ChannelNo>
      <Clip style={span(0.5, 150.5)} $top={3} $bg="#4c6890" $edge="#405474" $ink="#0c0f14" $line="#1c1c1c" $lw={1}>mEDIA_LUNA.avi | C:\Users\reals</Clip>
      <Clip style={span(150.5, 251)} $top={3} $bg="#6f84a6" $edge="#65748e" $ink="#0c0f14" $line="#1c1c1c" $lw={1}>Modelado_Coche_corr</Clip>
    </Channel>
    <Channel $light $h={56}><ChannelNo>1</ChannelNo></Channel>
    <Channel $h={0} />
    <Shade $side="left" style={{ width: START }} />
    <Shade $side="right" style={{ left: START + 251 * PX }} />
    {[100, 200, 300].map(f => <GridLine key={f} style={at(f - 1)} />)}
    <GridLine $bound style={at(0)} />
    <GridLine $bound style={at(251)} />
    <PlayLine style={at(234)} />
    <ScrollX><Knob /><Knob /></ScrollX>
    <ScrollY><Knob /><Knob /></ScrollY>
  </Timeline>
);

const TransportIcon = ({ d }: { d: string }) => (
  <svg width="18" height="14" viewBox="0 0 18 14" fill="#e0e0e0"><path d={d} /></svg>
);

export default function App() {
  return (
    <Page>
      <Global />
      <TitleBar>
        <svg width="19" height="17" viewBox="17 140 62 60">
          <BlenderMark fill="#ea7600" eye="#265787" hole="#fff" />
        </svg>
        Blender
      </TitleBar>

      <TopBar>
        <Icon box="16 116 64 102" w={22} h={34}><BlenderMark fill="#dcdcdc" eye="#dcdcdc" hole="#232323" /></Icon>
        <MenuGroup>
          {['File', 'Edit', 'Render', 'Window', 'Help'].map(m => <MenuLabel key={m}>{m}</MenuLabel>)}
        </MenuGroup>
        <Tabs>
          {['Layout', 'Modeling', 'Sculpting', 'UV Editing', 'Texture Paint', 'Shading', 'Animation', 'Rendering', 'Compositing'].map(t => (
            <WorkspaceTab key={t} $active={t === 'Layout'}>{t}</WorkspaceTab>
          ))}
          <WorkspaceTab aria-label="Add workspace" $pad={7}>
            <svg width="13" height="13" viewBox="0 0 13 13" stroke="#999" strokeWidth="1.5"><path d="M6.500 0v13M0 6.500h13" /></svg>
          </WorkspaceTab>
        </Tabs>
      </TopBar>

      <Frame>
        <Editor>
          <HeaderBar>
            <Control $w={42}>
              <IconButton $pad={3} aria-label="Editor type">
                <Icon box="21 252 66 75" w={22} h={25}>
                  <path d="M30 293h51v25H30zM30 284h51v6H30z" fill={W} />
                  <path d="M27 270h9v16h-9z" stroke="#aaa" strokeWidth="3" />
                  <path d="M42 275l35-12" stroke={W} strokeWidth="8" strokeDasharray="8 4" />
                </Icon>
                <Chevron />
              </IconButton>
            </Control>
            <Control $w={206} $left={10} $right={6}>
              <SelectIcon>
                <Icon box="180 252 66 75" w={22} h={25}>
                  <path d="M201 263h38v11h-38zM222 296h16v12h-16" stroke="#a5a5a5" strokeWidth="4" />
                  <path fillRule="evenodd" fill={W} d="M183 281h35v37h-35zM188 313h24l-12-22zM207 285h6v6h-6z" />
                </Icon>
              </SelectIcon>
              <PlainSelect $pad={35} aria-label="View type"><option>Sequencer &amp; Preview</option></PlainSelect>
              <SelectArrow><Chevron /></SelectArrow>
            </Control>
            <HeaderMenu>View</HeaderMenu>
            <HeaderMenu>Select</HeaderMenu>
            <HeaderMenu>Marker</HeaderMenu>
            <AddWrap>
              <AddButton aria-expanded="true">Add</AddButton>
              <AddMenu>
                {addMenu.map((e, i) =>
                  e === 'sep' || e === 'wide' ? <Divider key={i} $before={8} $after={3} /> : (
                    <MenuRow key={i} $h={29}>
                      <MenuItem $on={e.on} $dim={e.dim}>
                        {menuIcons[e.text]}
                        <MenuText text={e.text} at={e.key} />
                        <Grow />
                        {e.arrow && <Arrow />}
                      </MenuItem>
                      {e.on && <EffectMenu />}
                    </MenuRow>
                  ))}
              </AddMenu>
            </AddWrap>
            <HeaderMenu>Strip</HeaderMenu>
            <Control $w={116} $left={22}>
              <PlainSelect $pad={10} aria-label="Overlap mode"><option>Shuffle</option></PlainSelect>
              <SelectArrow><Chevron /></SelectArrow>
            </Control>
            <Control $w={42} $left={10}>
              <IconButton $pad={3} aria-label="Pivot point">
                <Icon box="842 132 66 75" w={22} h={25}>
                  <path d="M866 166a16 16 0 1 0 16 16M873 159a16 16 0 1 1 17 16" stroke={W} strokeWidth="4" />
                  <circle cx="879" cy="168" r="5" fill={W} />
                </Icon>
                <Chevron />
              </IconButton>
            </Control>
            <Control $w={54} $left={10}>
              <IconButton $pad={2} $w={26} $bg="#565656" aria-label="Snap">
                <Icon box="996 132 66 75" w={22} h={25}>
                  <path d="M1002 162l16-15c17-13 44 3 37 28-5 10-15 15-24 22l-7-10c12-7 20-15 18-23-4-10-16-8-32 6z" stroke="#a5a5a5" strokeWidth="4" />
                </Icon>
              </IconButton>
              <IconButton $pad={9} $w={28} aria-label="Snap options"><Chevron /></IconButton>
            </Control>
            <Control $w={42} $left={24}>
              <IconButton $pad={3} aria-label="Display mode">
                <Icon box="1233 132 66 75" w={22} h={25}>
                  <path d="M1247 196h-7v-53h54v53h-12M1244 194l12-24 12 24z" stroke={W} strokeWidth="4" />
                  <circle cx="1278" cy="159" r="6" fill={W} />
                </Icon>
                <Chevron />
              </IconButton>
            </Control>
            <Control $w={42} $left={10}>
              <IconButton $pad={3} aria-label="Channels">
                <Icon box="99 132 66 75" w={22} h={25}>
                  <path d="M106 142h55v55h-55z" stroke={W} strokeWidth="4" />
                  <path d="M106 142l55 55V142z" fill={W} />
                  <path d="M108 195l15-32 16 32z" fill="#8a8a8a" />
                  <circle cx="147" cy="158" r="5" fill="#2b2b2b" />
                </Icon>
                <Chevron />
              </IconButton>
            </Control>
            <Control $w={54} $left={10} $right={6}>
              <IconButton $pad={2} $w={26} $bg={accent} aria-label="Overlays">
                <Icon box="251 132 66 75" w={22} h={25}>
                  <circle cx="292" cy="161" r="20" fill="#fff" />
                  <circle cx="275" cy="177" r="18" stroke={accent} strokeWidth="9" />
                  <path d="M275 159a18 18 0 0 0 0 36 18 18 0 0 0 18-18" stroke="#fff" strokeWidth="4" />
                  <path d="M281 160a18 18 0 0 1 11 12" stroke="#fff" strokeWidth="9" />
                </Icon>
              </IconButton>
              <IconButton $pad={8} $w={28} aria-label="Overlay options"><Chevron /></IconButton>
            </Control>
            <HeaderMenu>Power Sequencer</HeaderMenu>
            <HeaderMenu>Playback:</HeaderMenu>
            <Grow />
            <Control $w={21}><PlainSelect $pad={10} aria-label="Sync mode"><option>No Sync</option></PlainSelect></Control>
          </HeaderBar>

          <Body>
            <ToolColumn>
              <ToolStack>
                {tools.map((t, i) => (
                  <Tool key={t.label} $active={i === 0} aria-label={t.label}>
                    <Icon box={`9 ${t.y} 162 144`} w={54} h={48}>{t.art}</Icon>
                  </Tool>
                ))}
              </ToolStack>
            </ToolColumn>

            <Center>
              <Preview>
                <PreviewArt />
                <Gizmos>
                  <Gizmo aria-label="Zoom">
                    <Icon box="582 57 114 114" w={38} h={38}>
                      <circle cx="645" cy="107" r="27" fill="#bdbdbd" />
                      <path d="M627 127l-18 18" stroke="#bdbdbd" strokeWidth="8" />
                      <path d="M632 107h27M645 93v28" stroke="#0c0c0c" strokeWidth="5" />
                    </Icon>
                  </Gizmo>
                  <Gizmo aria-label="Pan">
                    <Icon box="582 180 114 114" w={38} h={38}>
                      <path d="M627 240l-2-27M639 236l-1-29M650 236l3-27M660 243l8-22M622 250l-12-10" stroke="#bdbdbd" strokeWidth="8" strokeLinecap="round" />
                      <path d="M622 236h38l4 8c-4 16-10 26-24 26-12 0-18-10-26-24z" fill="#bdbdbd" />
                    </Icon>
                  </Gizmo>
                </Gizmos>
              </Preview>
              <TimelineView />
            </Center>

            <Props>
              <NameRow>
                <Icon box="48 321 62 75" w={20} h={26}><Wand /></Icon>
                <NameInput aria-label="Strip name" defaultValue="Speed" />
                <NameCheck><Check type="checkbox" aria-label="Strip enabled" $size={14} defaultChecked /></NameCheck>
              </NameRow>
              <Section title="Effect Strip" open h={160}>
                <Row $mb={8}>
                  <Label htmlFor="input1">Input 1</Label>
                  <FieldBox><Field id="input1" $kind="text" readOnly value="Modelado_Coche_cor..." /></FieldBox>
                </Row>
                <Row>
                  <Label htmlFor="mode">Speed Control</Label>
                  <FieldBox><ModeSelect id="mode" $pad={10}><option>Multiply</option></ModeSelect></FieldBox>
                </Row>
                <Row $mb={19}>
                  <span />
                  <FieldBox><Field $kind="num" $r="0 0 4px 4px" aria-label="Multiply factor" defaultValue="0.500" /></FieldBox>
                  <AnimDot />
                </Row>
                <Row>
                  <Label htmlFor="interp">Interpolation</Label>
                  <FieldBox><Check id="interp" type="checkbox" $size={18} /></FieldBox>
                  <AnimDot />
                </Row>
              </Section>
              <Section title="Compositing" />
              <Section title="Transform" />
              <Section title="Crop" />
              <Section title="Video" open h={80}>
                <Row $mb={7}>
                  <Label htmlFor="strobe">Strobe</Label>
                  <FieldBox><Field id="strobe" $kind="num" defaultValue="1.000" /></FieldBox>
                  <AnimDot />
                </Row>
                <Row>
                  <span />
                  <FieldBox><Check id="rev" type="checkbox" $size={18} /><label htmlFor="rev">Reverse Frames</label></FieldBox>
                  <AnimDot />
                </Row>
              </Section>
              <Section title="Color" />
              <Section title="Time" open lock h={189}>
                <Row $mb={8} $label={159} $tail={10}>
                  <Label htmlFor="channel">Channel</Label>
                  <FieldBox><Field id="channel" $kind="num" defaultValue="3" /></FieldBox>
                </Row>
                <Row $mb={1} $label={159} $tail={10}>
                  <Label htmlFor="start">Start</Label>
                  <FieldBox><Field id="start" $kind="off" $r="4px 4px 0 0" readOnly value={'00:00:30:00    150'} /></FieldBox>
                </Row>
                <Row $mb={4} $label={159} $tail={10}>
                  <Label htmlFor="duration">Duration</Label>
                  <FieldBox><Field id="duration" $kind="off" $r="0 0 4px 4px" readOnly value={'00:00:20:00    100'} /></FieldBox>
                </Row>
                <Row $mb={22} $label={159} $tail={10}>
                  <Label>End</Label>
                  <FieldBox><Stat><span>00:00:50:00</span><span>250</span></Stat></FieldBox>
                </Row>
                <Row $label={159} $tail={10}>
                  <Label>Current Frame</Label>
                  <FieldBox><Stat><span>00:00:16:04</span><span>84</span></Stat></FieldBox>
                </Row>
              </Section>
              <Section title="Custom Properties" />
            </Props>

            <SideTabs>
              {['Strip', 'Tool', 'Modifiers', 'Cache', 'Proxy', 'View', 'Tools', 'Metadata'].map(t => (
                <SideTab key={t} $active={t === 'Strip'}>{t}</SideTab>
              ))}
            </SideTabs>
          </Body>
        </Editor>
      </Frame>

      <Footer>
        <FootButton $w={42} $left={0} $tone="#2b2b2b" aria-label="Timeline editor">
          <svg width="20" height="18" viewBox="0 0 20 18"><circle cx="7" cy="9" r="9" fill="#e0e0e0" /><path d="M7 9l5-7" stroke="#222" strokeWidth="2" /></svg>
        </FootButton>
        <FootButton $w={96} $left={10} $tone="#2b2b2b" $between={10}>Playback <Chevron /></FootButton>
        <FootButton $w={84} $tone="#2b2b2b" $between={10}>Keying <Chevron /></FootButton>
        <FootMenu>View</FootMenu>
        <FootMenu>Marker</FootMenu>
        <Push $max={157} />
        <FootButton $w={25} aria-label="Auto keying"><svg width="12" height="12" viewBox="0 0 12 12"><circle cx="6" cy="6" r="6" fill="#ddd" /></svg></FootButton>
        <FootButton $w={28} $tone="#333" aria-label="Keying set" />
        <FootButton $w={26} $left={10} aria-label="Jump to start"><TransportIcon d="M1 0h2v14H1zM17 0v14L5 7z" /></FootButton>
        <FootButton $w={28} aria-label="Previous key"><TransportIcon d="M9 0l6 7H3zM1 4h2v10H1z" /></FootButton>
        <FootButton $w={28} aria-label="Play reverse"><TransportIcon d="M15 0v14L2 7z" /></FootButton>
        <FootButton $w={28} aria-label="Play"><TransportIcon d="M3 0v14l13-7z" /></FootButton>
        <FootButton $w={28} aria-label="Next key"><TransportIcon d="M9 0l6 7H3zM15 4h2v10h-2z" /></FootButton>
        <FootButton $w={28} aria-label="Jump to end"><TransportIcon d="M15 0h2v14h-2zM1 0v14l12-7z" /></FootButton>
        <Grow />
        <FootButton $w={106}>234</FootButton>
        <FootButton $w={26} $left={8} aria-label="Use preview range"><svg width="18" height="18" viewBox="0 0 18 18" fill="none" stroke="#ddd" strokeWidth="2"><circle cx="9" cy="10" r="6" /><path d="M5 1h8M9 1v3M9 10l5-5" /></svg></FootButton>
        <FootButton $w={128} $between={22}><span>Start</span><span>1</span></FootButton>
        <FootButton $w={120} $between={22}><span>End</span><span>250</span></FootButton>
      </Footer>

      <Annotations width="1310" height="891" viewBox="0 0 1310 891" fill="none" stroke={marker} strokeWidth="6">
        <path d="M627 430l184 8M835 434l56 293M588 576l16 68M576 627l28 18 22-34M1165 257h99M1059 301l190 1" />
      </Annotations>
    </Page>
  );
}
